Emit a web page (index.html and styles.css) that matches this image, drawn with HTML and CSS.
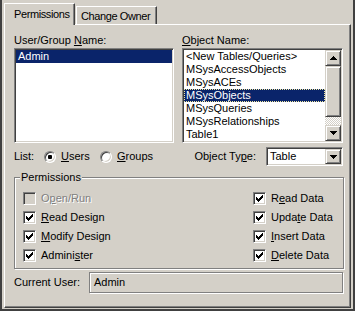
FILE: index.html
```html
<!DOCTYPE html>
<html lang="en">

<head>
    <meta charset="UTF-8">
    <meta name="viewport" content="width=device-width, initial-scale=1.0">
    <title>User and Group Permissions</title>

    <link rel="stylesheet" href="styles.css">
</head>

<body>
    <div class="window">
        <div class="tabs">
            <div class="tab tab_active">Permissions</div>
            <div class="tab">Change Owner</div>
        </div>

        <div class="panel">
            <div class="lists">
                <div class="list_col">
                    <div class="label">User/Group <u>N</u>ame:</div>
                    <div class="listbox">
                        <div class="list_items">
                            <div class="item selected">Admin</div>
                        </div>
                    </div>
                </div>
                <div class="list_col">
                    <div class="label"><u>O</u>bject Name:</div>
                    <div class="listbox">
                        <div class="list_items">
                            <div class="item">&lt;New Tables/Queries&gt;</div>
                            <div class="item">MSysAccessObjects</div>
                            <div class="item">MSysACEs</div>
                            <div class="item selected focused">MSysObjects</div>
                            <div class="item">MSysQueries</div>
                            <div class="item">MSysRelationships</div>
                            <div class="item">Table1</div>
                        </div>
                        <div class="scrollbar">
                            <div class="raised sb_btn">
                                <svg width="7" height="4" viewBox="0 0 7 4"><path d="M3 0h1v1H3zM2 1h3v1H2zM1 2h5v1H1zM0 3h7v1H0z"/></svg>
                            </div>
                            <div class="raised sb_thumb"></div>
                            <div class="sb_track"></div>
                            <div class="raised sb_btn">
                                <svg width="7" height="4" viewBox="0 0 7 4"><path d="M0 0h7v1H0zM1 1h5v1H1zM2 2h3v1H2zM3 3h1v1H3z"/></svg>
                            </div>
                        </div>
                    </div>
                </div>
            </div>

            <div class="options">
                <div class="list_opts">
                    <span class="opt_label">List:</span>
                    <span class="radio_opt"><span class="radio checked"></span><span><u>U</u>sers</span></span>
                    <span class="radio_opt"><span class="radio"></span><span><u>G</u>roups</span></span>
                </div>
                <div class="type_opts">
                    <span class="type_label">Object Ty<u>p</u>e:</span>
                    <div class="combo">
                        <span class="combo_text">Table</span>
                        <span class="raised combo_btn">
                            <svg width="7" height="4" viewBox="0 0 7 4"><path d="M0 0h7v1H0zM1 1h5v1H1zM2 2h3v1H2zM3 3h1v1H3z"/></svg>
                        </span>
                    </div>
                </div>
            </div>

            <fieldset class="group">
                <legend>Permissions</legend>
                <div class="perm_grid">
                    <div class="check_opt disabled"><span class="checkbox"></span><span>O<u>p</u>en/Run</span></div>
                    <div class="check_opt"><span class="checkbox"><svg class="tick" width="7" height="7" viewBox="0 0 7 7"><path d="M0 2h1v3H0zM1 3h1v3H1zM2 4h1v3H2zM3 3h1v3H3zM4 2h1v3H4zM5 1h1v3H5zM6 0h1v3H6z"/></svg></span><span>R<u>e</u>ad Data</span></div>
                    <div class="check_opt"><span class="checkbox"><svg class="tick" width="7" height="7" viewBox="0 0 7 7"><path d="M0 2h1v3H0zM1 3h1v3H1zM2 4h1v3H2zM3 3h1v3H3zM4 2h1v3H4zM5 1h1v3H5zM6 0h1v3H6z"/></svg></span><span><u>R</u>ead Design</span></div>
                    <div class="check_opt"><span class="checkbox"><svg class="tick" width="7" height="7" viewBox="0 0 7 7"><path d="M0 2h1v3H0zM1 3h1v3H1zM2 4h1v3H2zM3 3h1v3H3zM4 2h1v3H4zM5 1h1v3H5zM6 0h1v3H6z"/></svg></span><span>Upda<u>t</u>e Data</span></div>
                    <div class="check_opt"><span class="checkbox"><svg class="tick" width="7" height="7" viewBox="0 0 7 7"><path d="M0 2h1v3H0zM1 3h1v3H1zM2 4h1v3H2zM3 3h1v3H3zM4 2h1v3H4zM5 1h1v3H5zM6 0h1v3H6z"/></svg></span><span><u>M</u>odify Design</span></div>
                    <div class="check_opt"><span class="checkbox"><svg class="tick" width="7" height="7" viewBox="0 0 7 7"><path d="M0 2h1v3H0zM1 3h1v3H1zM2 4h1v3H2zM3 3h1v3H3zM4 2h1v3H4zM5 1h1v3H5zM6 0h1v3H6z"/></svg></span><span><u>I</u>nsert Data</span></div>
                    <div class="check_opt"><span class="checkbox"><svg class="tick" width="7" height="7" viewBox="0 0 7 7"><path d="M0 2h1v3H0zM1 3h1v3H1zM2 4h1v3H2zM3 3h1v3H3zM4 2h1v3H4zM5 1h1v3H5zM6 0h1v3H6z"/></svg></span><span>Admini<u>s</u>ter</span></div>
                    <div class="check_opt"><span class="checkbox"><svg class="tick" width="7" height="7" viewBox="0 0 7 7"><path d="M0 2h1v3H0zM1 3h1v3H1zM2 4h1v3H2zM3 3h1v3H3zM4 2h1v3H4zM5 1h1v3H5zM6 0h1v3H6z"/></svg></span><span><u>D</u>elete Data</span></div>
                </div>
            </fieldset>

            <div class="current">
                <span class="current_label">Current User:</span>
                <div class="etched_box">Admin</div>
            </div>
        </div>
    </div>
</body>

</html>
```

FILE: styles.css
```css
* {
    box-sizing: border-box;
}

body {
    margin: 0;
    background: #d4d0c8;
    font-family: "Liberation Sans", Arial, sans-serif;
    font-size: 11px;
    line-height: 13px;
    color: #000;
}

u {
    text-underline-offset: 1px;
}

.window {
    width: 355px;
    height: 311px;
    border: 2px solid #404040;
    border-top: 0;
}

/* tabs */
.tabs {
    display: flex;
    align-items: flex-end;
    height: 24px;
    padding-left: 2px;
}

.tab {
    height: 18px;
    width: 81px;
    margin-left: 1px;
    padding: 3px 0 0 4px;
    border: 1px solid;
    border-bottom: 0;
    border-color: #fff #404040 #fff #fff;
    box-shadow: inset -1px 0 0 #808080;
    white-space: nowrap;
    letter-spacing: -0.4px;
}

.tab_active {
    position: relative;
    z-index: 1;
    height: 22px;
    width: 71px;
    margin: 0 0 -1px 0;
    padding: 4px 0 0 9px;
    background: #d4d0c8;
}

.panel {
    height: 284px;
    margin: 0 2px;
    padding: 9px 6px 0 9px;
    border: 1px solid;
    border-color: #fff #404040 #404040 #fff;
    box-shadow: inset -1px -1px 0 #808080;
    display: flex;
    flex-direction: column;
}

/* list boxes */
.lists {
    display: grid;
    grid-template-columns: 160px 161px;
    column-gap: 8px;
}

.label {
    height: 13px;
    margin-bottom: 1px;
}

.listbox {
    height: 95px;
    padding: 1px;
    display: flex;
    background: #fff;
    border: 1px solid;
    border-color: #808080 #fff #fff #808080;
    box-shadow: inset 1px 1px 0 #404040, inset -1px -1px 0 #d4d0c8;
}

.list_items {
    flex: 1;
}

.item {
    height: 13px;
    padding-left: 2px;
    white-space: nowrap;
}

.selected {
    background: #0a246a;
    color: #fff;
}

.focused {
    outline: 1px dotted #f0e8a0;
    outline-offset: -1px;
}

.scrollbar {
    width: 16px;
    display: flex;
    flex-direction: column;
}

.raised {
    background: #d4d0c8;
    border: 1px solid;
    border-color: #d4d0c8 #404040 #404040 #d4d0c8;
    box-shadow: inset 1px 1px 0 #fff, inset -1px -1px 0 #808080;
}

.sb_btn {
    height: 16px;
    display: flex;
    align-items: center;
    justify-content: center;
}

.sb_thumb {
    height: 51px;
}

.sb_track {
    height: 8px;
    background: repeating-conic-gradient(#fff 0 25%, #d4d0c8 0 50%) 0 0 / 2px 2px;
}

/* list / object type row */
.options {
    display: grid;
    grid-template-columns: 160px 161px;
    column-gap: 8px;
    height: 19px;
    margin-top: 4px;
}

.list_opts {
    display: flex;
    align-items: center;
}

.opt_label {
    width: 30px;
}

.radio_opt {
    width: 56px;
    display: flex;
    align-items: center;
    gap: 5px;
}

.radio {
    width: 12px;
    height: 12px;
    border-radius: 50%;
    background: #fff;
    border: 1px solid;
    border-color: #808080 #fff #fff #808080;
    box-shadow: inset 1px 1px 0 #404040, inset -1px -1px 0 #d4d0c8;
    display: flex;
    align-items: center;
    justify-content: center;
}

.radio.checked::after {
    content: "";
    width: 4px;
    height: 4px;
    border-radius: 1px;
    background: #000;
}

.type_opts {
    display: flex;
    align-items: center;
    justify-content: flex-end;
}

.type_label {
    margin-right: 10px;
}

.combo {
    width: 77px;
    height: 19px;
    padding: 1px;
    display: flex;
    align-items: stretch;
    background: #fff;
    border: 1px solid;
    border-color: #808080 #fff #fff #808080;
    box-shadow: inset 1px 1px 0 #404040, inset -1px -1px 0 #d4d0c8;
}

.combo_text {
    flex: 1;
    padding-left: 2px;
    line-height: 15px;
}

.combo_btn {
    width: 16px;
    display: flex;
    align-items: center;
    justify-content: center;
}

/* permissions group */
.group {
    margin: 5px 0 0 0;
    padding: 5px 0 3px 8px;
    border: 1px solid #808080;
    box-shadow: inset 1px 1px 0 #fff, 1px 1px 0 #fff;
}

.group legend {
    margin-left: -3px;
    padding: 0 1px;
    background: #d4d0c8;
}

.perm_grid {
    display: grid;
    grid-template-columns: 230px auto;
    grid-auto-rows: 19px;
}

.check_opt {
    display: flex;
    align-items: center;
    gap: 5px;
}

.checkbox {
    width: 13px;
    height: 13px;
    background: #fff;
    border: 1px solid;
    border-color: #808080 #fff #fff #808080;
    box-shadow: inset 1px 1px 0 #404040, inset -1px -1px 0 #d4d0c8;
    display: flex;
    align-items: center;
    justify-content: center;
}

.disabled {
    color: #808080;
    text-shadow: 1px 1px 0 #fff;
}

.disabled .checkbox {
    background: #d4d0c8;
}

/* current user */
.current {
    display: flex;
    align-items: center;
    margin-top: 3px;
}

.current_label {
    width: 75px;
}

.etched_box {
    width: 254px;
    height: 21px;
    padding-left: 4px;
    line-height: 19px;
    border: 1px solid #808080;
    box-shadow: inset 1px 1px 0 #fff, 1px 1px 0 #fff;
}
```
